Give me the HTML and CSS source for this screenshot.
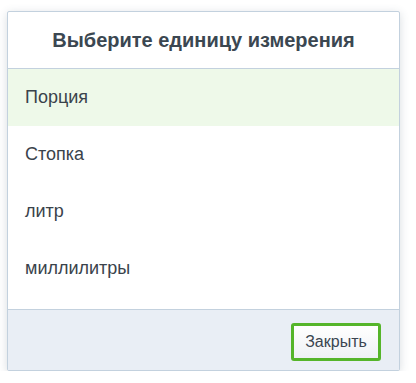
FILE: index.html
```html
<!DOCTYPE html>
<html lang="ru">
<head>
    <meta charset="UTF-8">
    <meta name="viewport" content="width=device-width, initial-scale=1.0">
    <title>Выберите единицу измерения</title>
    <link rel="stylesheet" href="styles.css">
</head>
<body>
    <div class="dialog">
        <div class="dialog-header">
            <h2>Выберите единицу измерения</h2>
        </div>
        <ul class="unit-list">
            <li class="unit selected">Порция</li>
            <li class="unit">Стопка</li>
            <li class="unit">литр</li>
            <li class="unit">миллилитры</li>
        </ul>
        <div class="dialog-footer">
            <button class="btn-close" type="button">Закрыть</button>
        </div>
    </div>
</body>
</html>
```

FILE: styles.css
```css
body {
    background-color: #fff;
    font-family: "Liberation Sans", Arial, sans-serif;
    margin: 0;
    padding: 11px 16px 0 7px;
}
.dialog {
    width: 391px;
    border: 1px solid #c3d1de;
    border-radius: 2px;
    background-color: #fff;
    box-shadow: 0 2px 10px rgba(60, 80, 100, 0.2);
}
.dialog-header {
    height: 56px;
    border-bottom: 1px solid #c3d1de;
    display: flex;
    align-items: center;
    justify-content: center;
}
.dialog-header h2 {
    margin: 0;
    font-size: 20px;
    font-weight: bold;
    color: #3b4751;
}
.unit-list {
    list-style: none;
    margin: 0;
    padding: 0 0 12px 0;
}
.unit {
    height: 57px;
    line-height: 57px;
    padding-left: 17px;
    font-size: 18px;
    color: #3a434b;
}
.unit.selected {
    background-color: #eef9e9;
}
.dialog-footer {
    box-sizing: border-box;
    height: 61px;
    padding: 3px 18px 0 0;
    border-top: 1px solid #c3d1de;
    background-color: #e9eef5;
    display: flex;
    align-items: center;
    justify-content: flex-end;
}
.btn-close {
    width: 90px;
    height: 38px;
    border: 3px solid #55b52a;
    border-radius: 3px;
    background: linear-gradient(#ffffff, #eef1f5);
    font-family: "Liberation Sans", Arial, sans-serif;
    font-size: 16px;
    color: #3a4550;
    cursor: pointer;
}
```
